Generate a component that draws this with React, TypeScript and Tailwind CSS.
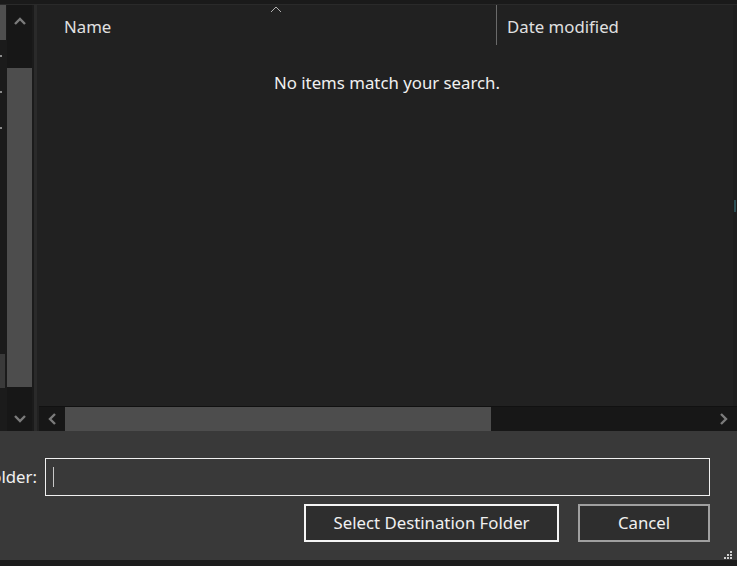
import React from "react";

function Chevron({ dir, className }: { dir: "up" | "down" | "left" | "right"; className?: string }) {
  const paths: Record<string, string> = {
    up: "M1 7 L6 2 L11 7",
    down: "M1 2 L6 7 L11 2",
    left: "M7 1 L2 6 L7 11",
    right: "M2 1 L7 6 L2 11",
  };
  const vb = dir === "up" || dir === "down" ? "0 0 12 9" : "0 0 9 12";
  const w = dir === "up" || dir === "down" ? 12 : 9;
  const h = dir === "up" || dir === "down" ? 9 : 12;
  return (
    <svg width={w} height={h} viewBox={vb} className={className}>
      <path d={paths[dir]} fill="none" stroke="#7b7b7b" strokeWidth="2.4" />
    </svg>
  );
}

export default function App() {
  return (
    <div
      className="w-[737px] h-[566px] overflow-hidden flex flex-col bg-[#1b1b1b] text-[#e6e6e6]"
      style={{ fontFamily: '"Noto Sans", "Open Sans", sans-serif' }}
    >
      {/* top strip */}
      <div className="h-[5px] shrink-0 bg-[#1a1a1a] border-b border-[#2a2a2a]" />

      {/* main area */}
      <div className="flex h-[426px] shrink-0">
        {/* left nav remnant */}
        <div className="w-[6px] flex flex-col bg-[#1b1b1b] relative">
          <div className="h-[35px] bg-[#4f4f4f]" />
          <div className="absolute left-0 top-[50px] w-[2px] h-[2px] bg-[#8a8a8a]" />
          <div className="absolute left-0 top-[86px] w-[2px] h-[2px] bg-[#8a8a8a]" />
          <div className="absolute left-0 top-[122px] w-[2px] h-[2px] bg-[#8a8a8a]" />
          <div className="absolute left-0 top-[349px] w-[5px] h-[34px] bg-[#3a3a3a]" />
        </div>
        {/* vertical scrollbar */}
        <div className="w-[25px] ml-[1px] bg-[#171717] flex flex-col">
          <div className="h-[63px] flex justify-center pt-[12px]">
            <Chevron dir="up" />
          </div>
          <div className="h-[319px] bg-[#4d4d4d]" />
          <div className="flex-1 flex justify-center items-start pt-[27px]">
            <Chevron dir="down" />
          </div>
        </div>
        <div className="w-[2px] bg-[#1b1b1b]" />
        <div className="w-[3px] bg-[#2a2a2a]" />

        {/* file list */}
        <div className="flex-1 flex flex-col bg-[#212121]">
          <div className="flex-1 flex">
            <div className="flex-1 flex flex-col">
              {/* header */}
              <div className="h-[40px] flex relative">
                <div className="w-[459px] pl-[27px] pt-[9px] text-[16.8px] text-[#e0e0e0] relative">
                  Name
                  <svg width="12" height="7" viewBox="0 0 12 7" className="absolute left-[233px] top-[1px]">
                    <path d="M1 6 L6 1 L11 6" fill="none" stroke="#b0b0b0" strokeWidth="1" />
                  </svg>
                </div>
                <div className="w-[1px] h-[40px] bg-[#6a6a6a]" />
                <div className="pl-[10px] pt-[9px] text-[16.8px] text-[#e0e0e0]">Date modified</div>
              </div>
              <div className="flex justify-center pt-[25px] text-[16.8px] text-[#f0f0f0] pl-[4px]">
                No items match your search.
              </div>
            </div>
            {/* right edge */}
            <div className="w-[4px] bg-[#1e1e1e] relative">
              <div className="absolute left-[1px] top-[195px] w-[2px] h-[12px] bg-[#2d4f55]" />
            </div>
          </div>
          {/* horizontal scrollbar */}
          <div className="h-[25px] flex ml-[2px] border-t border-[#111111] bg-[#171717]">
            <div className="w-[26px] flex items-center justify-center">
              <Chevron dir="left" />
            </div>
            <div className="w-[426px] bg-[#4d4d4d]" />
            <div className="flex-1" />
            <div className="w-[28px] flex items-center justify-center">
              <Chevron dir="right" />
            </div>
          </div>
        </div>
      </div>

      {/* bottom panel */}
      <div className="h-[129px] shrink-0 bg-[#393939] flex flex-col relative">
        <div className="flex items-center mt-[27px] h-[38px]">
          <div className="w-[45px] text-[16.8px] text-[#f0f0f0] flex justify-end pr-[8px] overflow-hidden whitespace-nowrap">
            older:
          </div>
          <div className="w-[665px] h-[38px] border border-[#f0f0f0] bg-[#393939] flex items-center pl-[7px]">
            <div className="w-[1px] h-[20px] bg-[#c8c8c8]" />
          </div>
        </div>
        <div className="flex mt-[8px] pl-[304px] gap-[19px]">
          <button className="w-[255px] h-[38px] border-2 border-[#f5f5f5] bg-[#2e2e2e] text-[16.8px] text-[#f0f0f0]">
            Select Destination Folder
          </button>
          <button className="w-[132px] h-[38px] border-2 border-[#a0a0a0] bg-[#2e2e2e] text-[16.8px] text-[#f0f0f0]">
            Cancel
          </button>
        </div>
        {/* gripper */}
        <svg width="10" height="10" viewBox="0 0 10 10" className="absolute right-[4px] bottom-[0px]">
          <rect x="7" y="1" width="2" height="2" fill="#cfcfcf" />
          <rect x="4" y="4" width="2" height="2" fill="#cfcfcf" />
          <rect x="7" y="4" width="2" height="2" fill="#cfcfcf" />
          <rect x="1" y="7" width="2" height="2" fill="#cfcfcf" />
          <rect x="4" y="7" width="2" height="2" fill="#cfcfcf" />
          <rect x="7" y="7" width="2" height="2" fill="#cfcfcf" />
        </svg>
      </div>
      <div className="flex-1 bg-[#1c1c1c]" />
    </div>
  );
}
